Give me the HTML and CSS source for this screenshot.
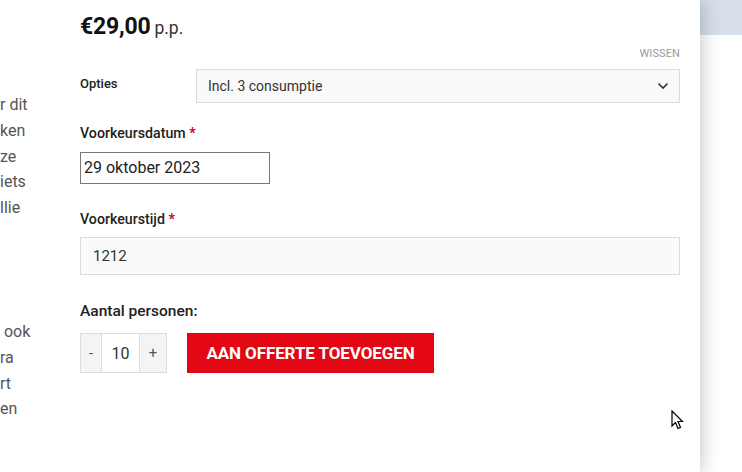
FILE: index.html
```html
<!DOCTYPE html>
<html lang="nl">
<head>
<meta charset="utf-8">
<title>Product</title>
<link rel="stylesheet" href="styles.css">
</head>
<body>
<div class="page">
  <div class="panel">
    <div class="side">
      <p class="side-p">r dit<br>ken<br>ze<br>iets<br>llie</p>
      <p class="side-p second">&nbsp;ook<br>ra<br>rt<br>en</p>
    </div>
    <div class="main">
      <div class="price"><span class="amount">€29,00</span> <span class="pp">p.p.</span></div>
      <div class="reset"><span>WISSEN</span></div>
      <div class="opt-row">
        <div class="opt-label">Opties</div>
        <div class="select">
          <span>Incl. 3 consumptie</span>
          <svg class="chev" width="12" height="8" viewBox="0 0 12 8"><path d="M1.5 1.5 L6 6 L10.5 1.5" fill="none" stroke="#333" stroke-width="1.6"/></svg>
        </div>
      </div>
      <div class="label lbl-date">Voorkeursdatum <span class="req">*</span></div>
      <div class="date-input">29 oktober 2023</div>
      <div class="label lbl-time">Voorkeurstijd <span class="req">*</span></div>
      <div class="time-input">1212</div>
      <div class="label lbl-qty">Aantal personen:</div>
      <div class="cart-row">
        <div class="qty">
          <span class="qbtn minus">-</span>
          <span class="qval">10</span>
          <span class="qbtn plus">+</span>
        </div>
        <div class="add-btn">AAN OFFERTE TOEVOEGEN</div>
      </div>
    </div>
  </div>
  <div class="strip">
    <div class="strip-top"></div>
  </div>
  <svg class="cursor" width="13" height="21" viewBox="0 0 13 21"><path d="M1 1 L1 16 L4.5 12.5 L7 18.5 L9.5 17.5 L7 11.5 L11.5 11.5 Z" fill="#fff" stroke="#000" stroke-width="1.2" stroke-linejoin="miter"/></svg>
</div>
</body>
</html>
```

FILE: styles.css
```css
html, body {
  margin: 0;
  padding: 0;
  background: #fff;
}
body {
  font-family: Roboto, "Liberation Sans", Arial, sans-serif;
  color: #222;
}
.page {
  position: relative;
  display: flex;
  width: 742px;
  height: 472px;
  overflow: hidden;
}
.panel {
  flex: none;
  width: 700px;
  height: 472px;
  display: flex;
  background: #fff;
  position: relative;
  z-index: 2;
  box-shadow: 3px 0 16px rgba(0, 0, 0, 0.2);
}
.side {
  flex: none;
  width: 80px;
  overflow: hidden;
  padding-top: 92px;
  box-sizing: border-box;
}
.side-p {
  margin: 0;
  font-size: 16px;
  line-height: 25.8px;
  color: #555;
  white-space: nowrap;
}
.side-p.second {
  margin-top: 98px;
}
.main {
  flex: 1;
  padding-right: 20px;
}
.price {
  margin-top: 12px;
  line-height: 30px;
  height: 30px;
  color: #111;
}
.amount {
  font-size: 23px;
  font-weight: 700;
  letter-spacing: -0.2px;
}
.pp {
  font-size: 17.5px;
  color: #333;
}
.reset {
  margin-top: 5px;
  text-align: right;
  font-size: 11px;
  line-height: 14px;
  color: #999;
  letter-spacing: 0.1px;
}
.opt-row {
  margin-top: 8px;
  display: flex;
}
.opt-label {
  flex: none;
  width: 116px;
  padding-top: 7px;
  font-size: 13px;
  line-height: 16px;
  font-weight: 500;
  color: #222;
}
.select {
  flex: 1;
  height: 34px;
  box-sizing: border-box;
  border: 1px solid #ddd;
  background: #f9f9f9;
  display: flex;
  align-items: center;
  justify-content: space-between;
  padding: 0 10px 0 11px;
  font-size: 14px;
  color: #333;
}
.chev {
  display: block;
}
.label {
  font-size: 14.2px;
  font-weight: 500;
  line-height: 20px;
  color: #222;
}
.req {
  color: #d0021b;
  font-weight: 700;
}
.lbl-date {
  margin-top: 20px;
}
.date-input {
  margin-top: 9px;
  width: 190px;
  height: 32px;
  box-sizing: border-box;
  border: 1px solid #777;
  background: #fff;
  font-size: 16px;
  line-height: 30px;
  padding-left: 3px;
  color: #222;
}
.lbl-time {
  margin-top: 25px;
}
.time-input {
  margin-top: 8px;
  height: 38px;
  box-sizing: border-box;
  border: 1px solid #ddd;
  background: #fafafa;
  font-size: 15px;
  line-height: 36px;
  padding-left: 12px;
  color: #333;
}
.lbl-qty {
  margin-top: 26px;
  font-size: 15.5px;
}
.cart-row {
  margin-top: 12px;
  display: flex;
  gap: 20px;
}
.qty {
  display: flex;
  height: 40px;
  box-sizing: border-box;
  border: 1px solid #ddd;
}
.qbtn, .qval {
  display: flex;
  align-items: center;
  justify-content: center;
  font-size: 15px;
  color: #555;
}
.qbtn {
  background: #f4f4f4;
}
.minus {
  width: 20px;
}
.plus {
  width: 26px;
}
.qval {
  width: 37px;
  background: #fff;
  border-left: 1px solid #ddd;
  border-right: 1px solid #ddd;
  color: #333;
  font-size: 16px;
}
.add-btn {
  width: 247px;
  height: 40px;
  background: #e30613;
  color: #fff;
  font-weight: 700;
  font-size: 17px;
  line-height: 40px;
  text-align: center;
  letter-spacing: -0.1px;
}
.strip {
  flex: 1;
  position: relative;
  z-index: 1;
  background: #fff;
}
.strip-top {
  height: 35px;
  background: #d6dfe9;
}
.cursor {
  position: absolute;
  left: 671px;
  top: 410px;
  z-index: 5;
}
```
